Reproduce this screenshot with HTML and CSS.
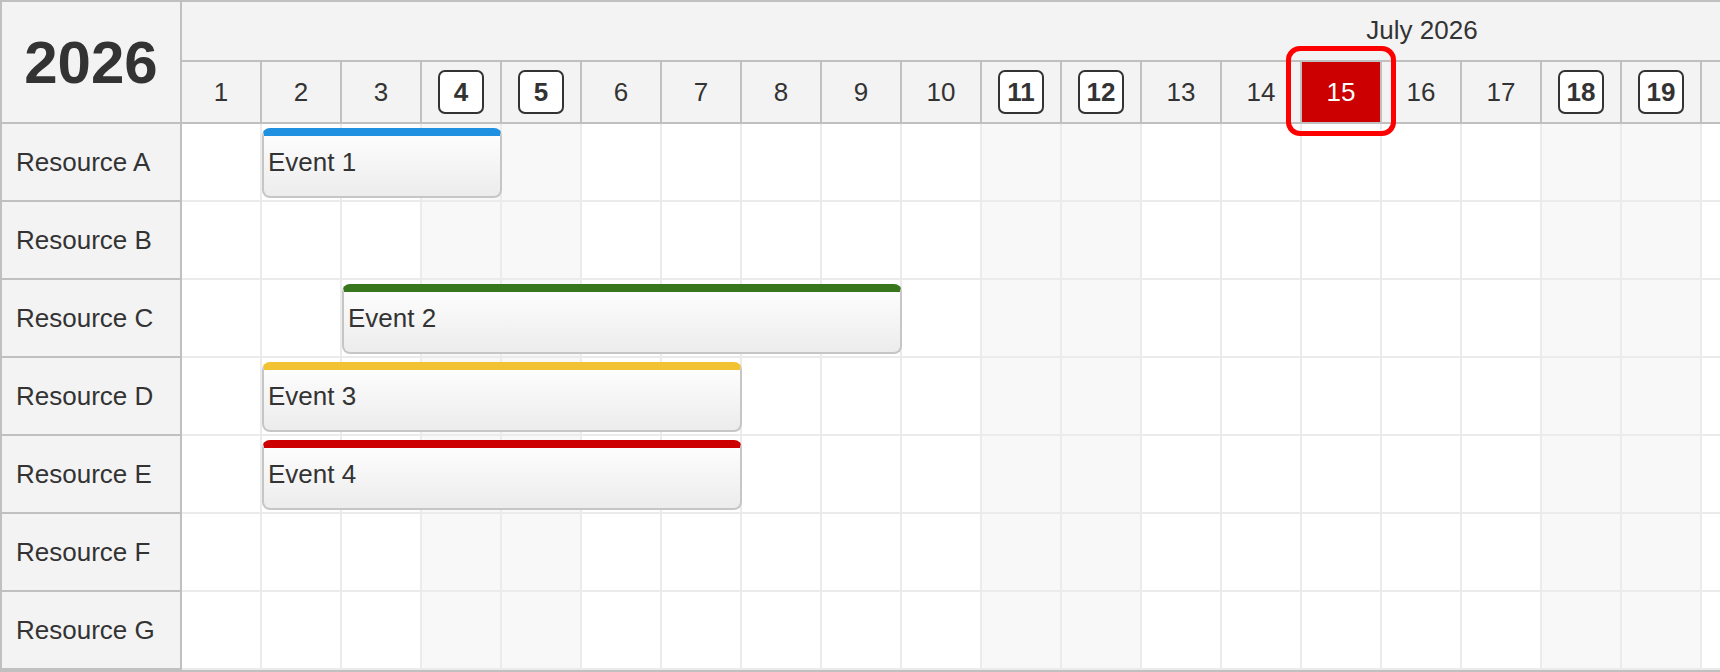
FILE: index.html
```html
<!DOCTYPE html>
<html lang="en">
<head>
    <meta charset="UTF-8">
    <meta name="viewport" content="width=device-width, initial-scale=1.0">
    <title>Scheduler - July 2026</title>
    <link rel="stylesheet" href="styles.css">
</head>
<body>
    <div class="scheduler">
        <div class="grid">
            <div class="sch-header">
                <div class="corner">2026</div>
                <div class="timeline-header">
                    <div class="month">July 2026</div>
                    <!-- only the visible days are rendered -->
                    <div class="days">
                        <div class="day">1</div>
                        <div class="day">2</div>
                        <div class="day">3</div>
                        <div class="day weekend"><span class="day-box">4</span></div>
                        <div class="day weekend"><span class="day-box">5</span></div>
                        <div class="day">6</div>
                        <div class="day">7</div>
                        <div class="day">8</div>
                        <div class="day">9</div>
                        <div class="day">10</div>
                        <div class="day weekend"><span class="day-box">11</span></div>
                        <div class="day weekend"><span class="day-box">12</span></div>
                        <div class="day">13</div>
                        <div class="day">14</div>
                        <div class="day today">15<span class="today-ring"></span></div>
                        <div class="day">16</div>
                        <div class="day">17</div>
                        <div class="day weekend"><span class="day-box">18</span></div>
                        <div class="day weekend"><span class="day-box">19</span></div>
                    </div>
                </div>
            </div>

            <div class="row">
                <div class="resource">Resource A</div>
                <div class="lane">
                    <div class="event bar-blue" style="left: 80px; width: 240px;">Event 1</div>
                </div>
            </div>
            <div class="row">
                <div class="resource">Resource B</div>
                <div class="lane"></div>
            </div>
            <div class="row">
                <div class="resource">Resource C</div>
                <div class="lane">
                    <div class="event bar-green" style="left: 160px; width: 560px;">Event 2</div>
                </div>
            </div>
            <div class="row">
                <div class="resource">Resource D</div>
                <div class="lane">
                    <div class="event bar-yellow" style="left: 80px; width: 480px;">Event 3</div>
                </div>
            </div>
            <div class="row">
                <div class="resource">Resource E</div>
                <div class="lane">
                    <div class="event bar-red" style="left: 80px; width: 480px;">Event 4</div>
                </div>
            </div>
            <div class="row">
                <div class="resource">Resource F</div>
                <div class="lane"></div>
            </div>
            <div class="row">
                <div class="resource">Resource G</div>
                <div class="lane"></div>
            </div>
        </div>
    </div>
</body>
</html>
```
FILE: styles.css
```css
/* styles.css */

body {
    margin: 0;
    font-family: "Liberation Sans", Arial, sans-serif;
    color: #333;
    overflow: hidden;
}

.scheduler {
    width: 1720px;
    height: 672px;
    overflow: hidden;
}

.grid {
    display: flex;
    flex-direction: column;
    width: max-content;
    border: 2px solid #c0c0c0;
}

/* header */

.sch-header {
    display: flex;
}

.corner {
    width: 180px;
    height: 122px;
    box-sizing: border-box;
    border-right: 2px solid #c0c0c0;
    border-bottom: 2px solid #c0c0c0;
    background-color: #f3f3f3;
    display: flex;
    align-items: center;
    justify-content: center;
    font-size: 60px;
    font-weight: bold;
}

.timeline-header {
    display: flex;
    flex-direction: column;
    width: 2480px; /* 31 days x 80px */
    background-color: #f3f3f3;
}

.month {
    height: 60px;
    box-sizing: border-box;
    padding-bottom: 2px;
    border-bottom: 2px solid #c0c0c0;
    display: flex;
    align-items: center;
    justify-content: center;
    font-size: 26px;
}

.days {
    display: flex;
    height: 62px;
    box-sizing: border-box;
    border-bottom: 2px solid #c0c0c0;
}

.day {
    position: relative;
    width: 80px;
    box-sizing: border-box;
    border-right: 2px solid #c0c0c0;
    display: flex;
    align-items: center;
    justify-content: center;
    font-size: 26px;
}

.day-box {
    width: 46px;
    height: 44px;
    box-sizing: border-box;
    border: 2px solid #333;
    border-radius: 7px;
    background-color: #fff;
    display: flex;
    align-items: center;
    justify-content: center;
    font-weight: bold;
}

.day.today {
    background-color: #cc0000;
    color: #fff;
}

.today-ring {
    position: absolute;
    top: -16px;
    left: -16px;
    width: 110px;
    height: 90px;
    box-sizing: border-box;
    border: 5px solid #ff0000;
    border-radius: 14px;
    z-index: 2;
}

/* rows */

.row {
    display: flex;
    height: 78px;
}

.resource {
    width: 180px;
    box-sizing: border-box;
    padding-left: 14px;
    border-right: 2px solid #c0c0c0;
    border-bottom: 2px solid #c0c0c0;
    background-color: #f3f3f3;
    display: flex;
    align-items: center;
    font-size: 26px;
}

.lane {
    position: relative;
    width: 2480px;
    box-sizing: border-box;
    border-bottom: 2px solid #ebebeb;
    background-color: #fff;
    background-image:
        linear-gradient(to right, transparent 78px, #ebebeb 78px),
        linear-gradient(to right, transparent 240px, #f8f8f8 240px, #f8f8f8 400px, transparent 400px);
    background-size: 80px 100%, 560px 100%;
    background-repeat: repeat-x;
}

.event {
    position: absolute;
    top: 4px;
    height: 70px;
    box-sizing: border-box;
    padding: 0 0 8px 4px;
    border: 2px solid #c6c6c6;
    border-top: 8px solid;
    border-radius: 8px;
    background: linear-gradient(to bottom, #fdfdfd, #ececec);
    display: flex;
    align-items: center;
    font-size: 26px;
    white-space: nowrap;
    overflow: hidden;
}

.bar-blue {
    border-top-color: #2090e0;
}

.bar-green {
    border-top-color: #38761d;
}

.bar-yellow {
    border-top-color: #f1c232;
}

.bar-red {
    border-top-color: #cc0000;
}
```
